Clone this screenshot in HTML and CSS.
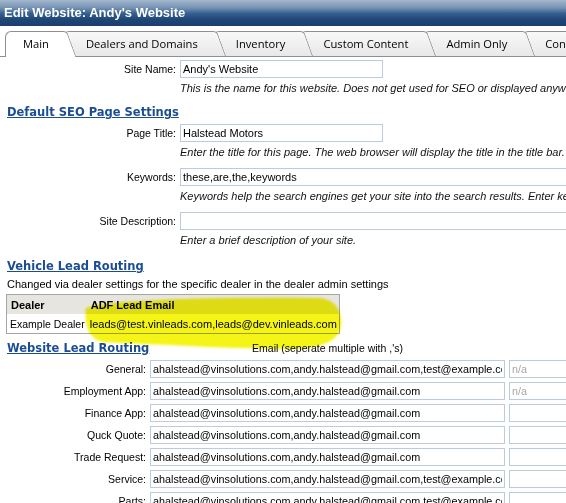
FILE: index.html
```html
<!DOCTYPE html>
<html>
<head>
<meta charset="utf-8">
<title>Edit Website</title>
<link rel="stylesheet" href="styles.css">
</head>
<body>
<div class="titlebar">Edit Website: Andy's Website</div>

<div class="tabs">
  <div class="tab active t1">Main</div>
  <div class="tab t2">Dealers and Domains</div>
  <div class="tab t3">Inventory</div>
  <div class="tab t4">Custom Content</div>
  <div class="tab t5">Admin Only</div>
  <div class="tab t6">Content</div>
</div>

<div class="main">
  <div class="field first">
    <label class="field-label">Site Name:</label>
    <div class="field-body">
      <input class="txt" type="text" value="Andy's Website" readonly>
      <div class="hint">This is the name for this website. Does not get used for SEO or displayed anywhere on the site.</div>
    </div>
  </div>

  <h2 class="section">Default SEO Page Settings</h2>

  <div class="field">
    <label class="field-label">Page Title:</label>
    <div class="field-body">
      <input class="txt" type="text" value="Halstead Motors" readonly>
      <div class="hint">Enter the title for this page. The web browser will display the title in the title bar.</div>
    </div>
  </div>

  <div class="field">
    <label class="field-label">Keywords:</label>
    <div class="field-body">
      <input class="txt wide" type="text" value="these,are,the,keywords" readonly>
      <div class="hint">Keywords help the search engines get your site into the search results. Enter keywords separated by commas.</div>
    </div>
  </div>

  <div class="field">
    <label class="field-label">Site Description:</label>
    <div class="field-body">
      <input class="txt wide" type="text" value="" readonly>
      <div class="hint">Enter a brief description of your site.</div>
    </div>
  </div>

  <h2 class="section s-vehicle">Vehicle Lead Routing</h2>
  <div class="note">Changed via dealer settings for the specific dealer in the dealer admin settings</div>

  <div class="dealer-wrap">
    <table class="dealers">
      <tr class="head"><th class="c1">Dealer</th><th class="c2">ADF Lead Email</th></tr>
      <tr><td class="c1">Example Dealer</td><td class="c2">leads@test.vinleads.com,leads@dev.vinleads.com</td></tr>
    </table>
    <svg class="marker" width="270" height="60" viewBox="80 290 270 60" aria-hidden="true">
      <defs><filter id="soft"><feGaussianBlur stdDeviation="1.2"/></filter></defs>
      <path filter="url(#soft)" fill="#f4f414" d="M86,307 C110,299 200,296 318,297 C336,298 342,310 341,324 C340,338 326,347 292,348 C240,348 170,344 104,341 C88,339 84,322 86,307 Z"/>
    </svg>
  </div>

  <div class="routing">
    <h2 class="section r-head">Website Lead Routing</h2>
    <div class="col-head">Email (seperate multiple with ,'s)</div>
    <div></div>

    <label class="r-label">General:</label>
    <input class="txt full" type="text" value="ahalstead@vinsolutions.com,andy.halstead@gmail.com,test@example.com" readonly>
    <input class="txt full" type="text" placeholder="n/a" readonly>

    <label class="r-label">Employment App:</label>
    <input class="txt full" type="text" value="ahalstead@vinsolutions.com,andy.halstead@gmail.com" readonly>
    <input class="txt full" type="text" placeholder="n/a" readonly>

    <label class="r-label">Finance App:</label>
    <input class="txt full" type="text" value="ahalstead@vinsolutions.com,andy.halstead@gmail.com" readonly>
    <input class="txt full" type="text" readonly>

    <label class="r-label">Quck Quote:</label>
    <input class="txt full" type="text" value="ahalstead@vinsolutions.com,andy.halstead@gmail.com" readonly>
    <input class="txt full" type="text" readonly>

    <label class="r-label">Trade Request:</label>
    <input class="txt full" type="text" value="ahalstead@vinsolutions.com,andy.halstead@gmail.com" readonly>
    <input class="txt full" type="text" readonly>

    <label class="r-label">Service:</label>
    <input class="txt full" type="text" value="ahalstead@vinsolutions.com,andy.halstead@gmail.com,test@example.com" readonly>
    <input class="txt full" type="text" readonly>

    <label class="r-label">Parts:</label>
    <input class="txt full" type="text" value="ahalstead@vinsolutions.com,andy.halstead@gmail.com,test@example.com" readonly>
    <input class="txt full" type="text" readonly>
  </div>
</div>
</body>
</html>
```

FILE: styles.css
```css
html, body {
  margin: 0;
  padding: 0;
  overflow: hidden;
  background: #fff;
}
body {
  font-family: "Liberation Sans", Arial, sans-serif;
  font-size: 11px;
  color: #000;
  width: 566px;
  height: 503px;
}

.titlebar {
  height: 26px;
  box-sizing: border-box;
  padding-left: 4px;
  font: bold 13px/25px "Liberation Sans", Arial, sans-serif;
  color: #fff;
  background: linear-gradient(to bottom, #a3b7cd 0%, #7693b3 30%, #34608f 52%, #1f4677 75%, #1b3f6d 100%);
  white-space: nowrap;
}

/* Tabs */
.tabs {
  display: flex;
  height: 25px;
  margin-top: 5px;
  padding-left: 5px;
  border-bottom: 1px solid #8f8f8f;
  white-space: nowrap;
}
.tab {
  position: relative;
  height: 25px;
  box-sizing: border-box;
  padding: 0 19px 0 23px;
  margin-left: -4px;
  font: 11.2px/25px "Open Sans", sans-serif;
  color: #000;
}
.tab.t1 { z-index: 6; margin-left: 0; padding: 0 18px; height: 26px; margin-bottom: -1px; }
.tab.t2 { z-index: 5; }
.tab.t3 { z-index: 4; }
.tab.t4 { z-index: 3; }
.tab.t5 { z-index: 2; }
.tab.t6 { z-index: 1; }
.tab::before {
  content: "";
  position: absolute;
  left: 0;
  top: 0;
  bottom: 0;
  right: 12px;
  border-top: 1px solid #8f8f8f;
  border-left: 1px solid #8f8f8f;
  border-top-left-radius: 6px;
  background: linear-gradient(to bottom, #f8f8f8, #e8e8e8);
  z-index: -1;
}
.tab::after {
  content: "";
  position: absolute;
  top: 0;
  bottom: 0;
  right: 0;
  width: 24px;
  border-top: 1px solid #8f8f8f;
  border-right: 1px solid #8f8f8f;
  border-top-right-radius: 4px;
  transform-origin: top;
  transform: skewX(20deg);
  background: linear-gradient(to bottom, #f8f8f8, #e8e8e8);
  z-index: -1;
}
.tab.active::before,
.tab.active::after {
  background: #fff;
}

/* Main form */
.main {
  padding-top: 3px;
}
.field {
  display: flex;
  align-items: flex-start;
  margin-bottom: 8px;
}
.field-label {
  width: 176px;
  flex: none;
  text-align: right;
  font-size: 10.5px;
  line-height: 18px;
  margin-right: 4px;
}
.field-body {
  flex: 1;
  min-width: 0;
}
.txt {
  display: block;
  box-sizing: border-box;
  height: 18px;
  width: 203px;
  margin: 0;
  padding: 0 2px;
  border: 1px solid #bccbdf;
  background: #fff;
  font: 11px "Liberation Sans", Arial, sans-serif;
  color: #000;
  outline: none;
  -webkit-appearance: none;
  appearance: none;
}
.txt.wide {
  width: 420px;
}
.txt::placeholder {
  color: #a8a8a8;
}
.hint {
  margin-top: 2px;
  line-height: 16px;
  font-style: italic;
  white-space: nowrap;
  color: #111;
}

.section {
  margin: 0;
  padding-left: 7px;
  font: bold 11.5px/16px "DejaVu Sans", Verdana, sans-serif;
  color: #1b4d92;
  text-decoration: underline;
  white-space: nowrap;
}
.main > .section {
  margin-bottom: 4px;
}
.main > .s-vehicle {
  margin-top: 10px;
  margin-bottom: 2px;
}
.note {
  padding-left: 7px;
  line-height: 16px;
  white-space: nowrap;
}

/* Dealer table */
.dealer-wrap {
  position: relative;
  margin: 2px 0 6px 6px;
  width: 332px;
}
.dealers {
  border-collapse: collapse;
  border: 1px solid #a6a6a6;
  font-size: 11px;
}
.dealers th,
.dealers td {
  height: 19px;
  padding: 0 2px 0 3px;
  text-align: left;
  white-space: nowrap;
}
.dealers .c1 {
  width: 75px;
  font-size: 10.5px;
}
.dealers .head th {
  background: #e7e5df;
  font-weight: bold;
  font-size: 11px;
  padding-left: 4px;
}
.marker {
  position: absolute;
  left: 74px;
  top: -3px;
  mix-blend-mode: multiply;
  pointer-events: none;
}

/* Routing grid */
.routing {
  display: grid;
  grid-template-columns: 146px 355px 90px;
  column-gap: 4px;
  row-gap: 4px;
  align-items: center;
}
.col-head {
  text-align: center;
  font-size: 10.5px;
  line-height: 16px;
  white-space: nowrap;
}
.r-label {
  text-align: right;
  font-size: 10.5px;
  line-height: 18px;
  white-space: nowrap;
}
.txt.full {
  width: 100%;
  font-size: 10.8px;
}
```
